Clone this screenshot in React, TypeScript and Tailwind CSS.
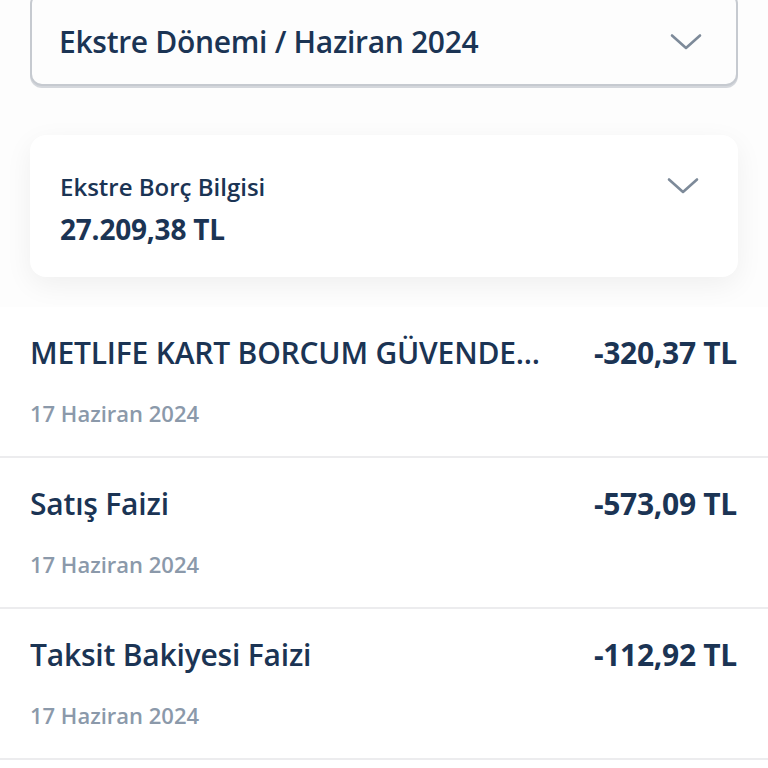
interface Txn {
  title: string;
  date: string;
  amount: string;
}

const txns: Txn[] = [
  { title: "METLIFE KART BORCUM GÜVENDE...", date: "17 Haziran 2024", amount: "-320,37 TL" },
  { title: "Satış Faizi", date: "17 Haziran 2024", amount: "-573,09 TL" },
  { title: "Taksit Bakiyesi Faizi", date: "17 Haziran 2024", amount: "-112,92 TL" },
];

function Chevron() {
  return (
    <svg width="32" height="18" viewBox="0 0 32 18" fill="none" className="shrink-0">
      <path d="M2 2.5 L16 15 L30 2.5" stroke="#7d8a99" strokeWidth="2.6" strokeLinecap="round" strokeLinejoin="round" />
    </svg>
  );
}

export default function App() {
  return (
    <div
      className="h-[768px] w-[768px] overflow-hidden bg-white text-[#1b3454]"
      style={{ fontFamily: '"Open Sans", "Noto Sans", sans-serif' }}
    >
      <div className="bg-[#fdfdfd] px-[30px] pb-[30px]">
        <div className="-mt-[8px] flex h-[94px] items-center justify-between rounded-[12px] border-2 border-[#c6cad0] bg-[#fdfdfd] pl-[27px] pr-[34px] pt-[5px] shadow-[0_2px_0_#d4d7dc]">
          <span className="text-[30px] font-semibold leading-[40px] tracking-[-0.3px]">Ekstre Dönemi / Haziran 2024</span>
          <Chevron />
        </div>

        <div className="mt-[49px] flex items-start justify-between rounded-[16px] bg-white pb-[31px] pl-[30px] pr-[39px] pt-[37px] shadow-[0_8px_28px_rgba(0,0,0,0.06)]">
          <div className="flex flex-col">
            <span className="text-[24px] font-semibold leading-[30px]">Ekstre Borç Bilgisi</span>
            <span className="mt-[10px] text-[28px] font-bold leading-[34px] tracking-[-0.2px]">27.209,38 TL</span>
          </div>
          <div className="pt-[5px]">
            <Chevron />
          </div>
        </div>
      </div>

      <div className="flex flex-col">
        {txns.map((t) => (
          <div key={t.amount} className="border-b-2 border-[#ececee] pb-[28px] pl-[30px] pr-[31px] pt-[26px]">
            <div className="flex items-center justify-between gap-[50px]">
              <span className="min-w-0 truncate text-[30px] font-semibold leading-[40px] tracking-[-0.2px]">{t.title}</span>
              <span className="shrink-0 text-[30px] font-bold leading-[40px] tracking-[-0.3px]">{t.amount}</span>
            </div>
            <div className="mt-[25px] text-[22px] font-semibold leading-[30px] text-[#8b99aa]">{t.date}</div>
          </div>
        ))}
      </div>
    </div>
  );
}
